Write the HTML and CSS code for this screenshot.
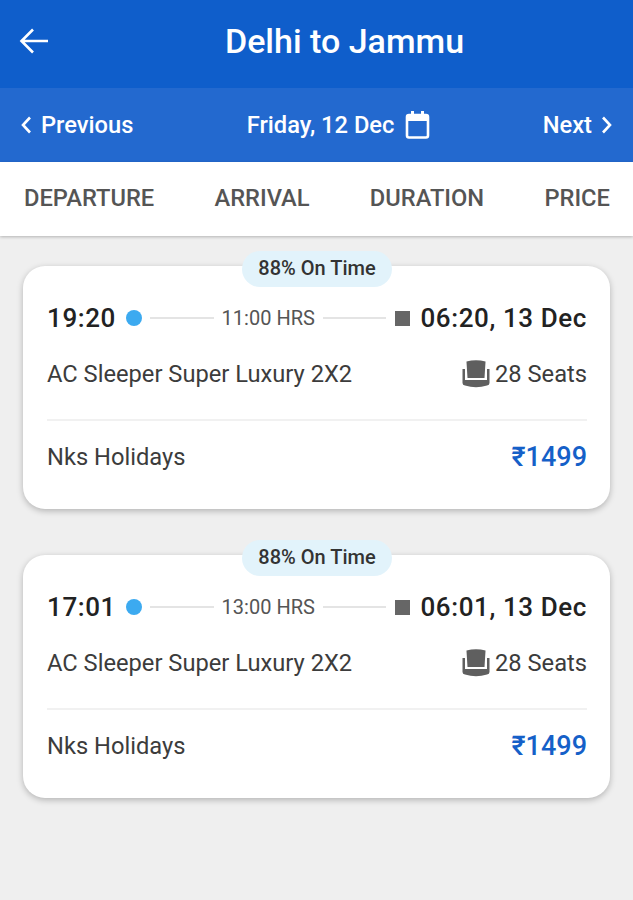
FILE: index.html
```html
<!doctype html>
<html lang="en">
<head>
    <meta charset="UTF-8">
    <title>Delhi to Jammu</title>
    <link rel="stylesheet" href="styles.css">
</head>
<body>
<div class="top_bar">
    <svg class="back" width="32" height="28" viewBox="0 0 32 28" fill="none" stroke="#fff" stroke-width="2.6">
        <path d="M30 14H4M15 2.500L3.500 14L15 25.500"/>
    </svg>
    <h1>Delhi to Jammu</h1>
</div>
<div class="date_bar">
    <div class="date_link">
        <svg width="13" height="20" viewBox="0 0 13 20" fill="none" stroke="#fff" stroke-width="2.600"><path d="M11 2.500L4 10L11 17.500"/></svg>
        <span>Previous</span>
    </div>
    <div class="date_now">
        <span>Friday, 12 Dec</span>
        <svg width="26" height="30" viewBox="0 0 26 30" fill="none">
            <rect x="2" y="5" width="21" height="22.500" rx="2" stroke="#fff" stroke-width="2.600"/>
            <rect x="2" y="5" width="21" height="6" fill="#fff"/>
            <rect x="6" y="1" width="3" height="5" fill="#fff"/>
            <rect x="16" y="1" width="3" height="5" fill="#fff"/>
        </svg>
    </div>
    <div class="date_link">
        <span>Next</span>
        <svg width="13" height="20" viewBox="0 0 13 20" fill="none" stroke="#fff" stroke-width="2.600"><path d="M2 2.500L9 10L2 17.500"/></svg>
    </div>
</div>
<div class="sort_bar">
    <span>DEPARTURE</span>
    <span>ARRIVAL</span>
    <span>DURATION</span>
    <span>PRICE</span>
</div>
<div class="list">
    <div class="card">
        <div class="on_time">88% On Time</div>
        <div class="row times">
            <b class="time">19:20</b>
            <i class="dot"></i>
            <i class="line"></i>
            <span class="dur">11:00 HRS</span>
            <i class="line"></i>
            <i class="stop"></i>
            <b class="time">06:20, 13 Dec</b>
        </div>
        <div class="row info">
            <span>AC Sleeper Super Luxury 2X2</span>
            <span class="seats">
                <svg width="30" height="30" viewBox="0 0 30 30">
                    <path d="M5.500 2.500Q15 0 24.500 2.500L23.500 19H6.500Z" fill="#5f5f5f"/>
                    <path d="M1.500 10H4V21H26V10H28.500V24Q28.500 26 26 26.500Q15 30 4 26.500Q1.500 26 1.500 24Z" fill="#5f5f5f"/>
                </svg>
                28 Seats
            </span>
        </div>
        <div class="row bottom">
            <span>Nks Holidays</span>
            <b class="price">₹1499</b>
        </div>
    </div>
    <div class="card">
        <div class="on_time">88% On Time</div>
        <div class="row times">
            <b class="time">17:01</b>
            <i class="dot"></i>
            <i class="line"></i>
            <span class="dur">13:00 HRS</span>
            <i class="line"></i>
            <i class="stop"></i>
            <b class="time">06:01, 13 Dec</b>
        </div>
        <div class="row info">
            <span>AC Sleeper Super Luxury 2X2</span>
            <span class="seats">
                <svg width="30" height="30" viewBox="0 0 30 30">
                    <path d="M5.500 2.500Q15 0 24.500 2.500L23.500 19H6.500Z" fill="#5f5f5f"/>
                    <path d="M1.500 10H4V21H26V10H28.500V24Q28.500 26 26 26.500Q15 30 4 26.500Q1.500 26 1.500 24Z" fill="#5f5f5f"/>
                </svg>
                28 Seats
            </span>
        </div>
        <div class="row bottom">
            <span>Nks Holidays</span>
            <b class="price">₹1499</b>
        </div>
    </div>
</div>
</body>
</html>
```
FILE: styles.css
```css
* {
    margin: 0;
    padding: 0;
    box-sizing: border-box;
}

html, body {
    height: 100%;
}

body {
    background: #efefef;
    font-family: Roboto, "Noto Sans", sans-serif;
    color: #333;
}

.top_bar {
    position: relative;
    height: 88px;
    padding: 0 0 7px 56px;
    background: #0f5ecb;
    display: flex;
    align-items: center;
    justify-content: center;
}

.top_bar .back {
    position: absolute;
    left: 18px;
    top: 27px;
}

.top_bar h1 {
    font-size: 34px;
    font-weight: 500;
    color: #fff;
}

.date_bar {
    height: 74px;
    padding: 0 19px;
    background: #2369cf;
    color: #fff;
    font-size: 23.700px;
    font-weight: 500;
    display: flex;
    align-items: center;
    justify-content: space-between;
}

.date_link {
    display: flex;
    align-items: center;
    gap: 9px;
}

.date_now {
    display: flex;
    align-items: center;
    gap: 11px;
    margin-left: 2px;
}

.sort_bar {
    height: 74px;
    padding: 0 23px 2px 24px;
    background: #fff;
    color: #555;
    font-size: 23.700px;
    font-weight: 500;
    display: flex;
    align-items: center;
    justify-content: space-between;
    box-shadow: 0 1px 3px rgba(0, 0, 0, .25);
}

.list {
    padding: 30px 23px 0;
    display: flex;
    flex-direction: column;
    gap: 46px;
}

.card {
    position: relative;
    height: 243px;
    padding: 0 23px 0 24px;
    background: #fff;
    border-radius: 22px;
    box-shadow: 0 2px 6px rgba(0, 0, 0, .25);
}

.on_time {
    position: absolute;
    left: 219px;
    top: -15px;
    width: 150px;
    height: 36px;
    line-height: 34px;
    text-align: center;
    border-radius: 18px;
    background: #e2f3fb;
    font-size: 20px;
    font-weight: 500;
    color: #333;
}

.row {
    display: flex;
    align-items: center;
}

.times {
    height: 50px;
    margin-top: 27px;
}

.time {
    font-size: 26px;
    font-weight: 500;
    color: #222;
    letter-spacing: .6px;
}

.dot {
    width: 16px;
    height: 16px;
    margin-left: 10px;
    border-radius: 50%;
    background: #3caaf0;
}

.line {
    flex: 1;
    height: 2px;
    background: #e4e4e4;
    margin: 0 8px;
}

.dur {
    font-size: 20px;
    color: #555;
}

.stop {
    width: 15px;
    height: 15px;
    margin-left: 1px;
    margin-right: 10px;
    background: #666;
}

.info {
    height: 78px;
    padding-bottom: 14px;
    justify-content: space-between;
    font-size: 23.700px;
    color: #3c3c3c;
    border-bottom: 2px solid #f1f1f1;
}

.seats {
    display: flex;
    align-items: center;
    gap: 4px;
}

.bottom {
    height: 72px;
    justify-content: space-between;
    font-size: 23.700px;
    color: #3c3c3c;
}

.price {
    font-size: 27px;
    font-weight: 500;
    color: #1560c8;
}
```
